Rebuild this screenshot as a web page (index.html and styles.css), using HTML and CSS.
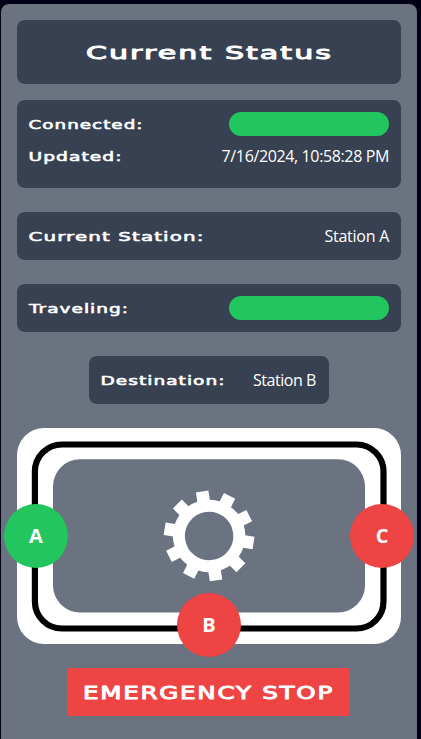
FILE: index.html
```html
<!DOCTYPE html>
<html lang="en">
<head>
<meta charset="utf-8">
<title>Current Status</title>
<link rel="stylesheet" href="styles.css">
</head>
<body>
<main class="panel">
  <h1 class="box title"><svg class="wide large" width="246" height="32"><text x="0" y="23" textLength="247" lengthAdjust="spacingAndGlyphs">Current Status</text></svg></h1>
  <section class="box status">
    <div class="row"><svg class="wide" width="114" height="24"><text x="-0.5" y="17" textLength="115" lengthAdjust="spacingAndGlyphs">Connected:</text></svg><span class="pill"></span></div>
    <div class="row"><svg class="wide" width="93" height="24"><text x="-0.5" y="17" textLength="94" lengthAdjust="spacingAndGlyphs">Updated:</text></svg><span class="value date">7/16/2024, 10:58:28 PM</span></div>
  </section>
  <section class="box row"><svg class="wide" width="175" height="24"><text x="-0.5" y="17" textLength="176" lengthAdjust="spacingAndGlyphs">Current Station:</text></svg><span class="value">Station A</span></section>
  <section class="box row"><svg class="wide" width="99" height="24"><text x="0" y="17" textLength="100" lengthAdjust="spacingAndGlyphs">Traveling:</text></svg><span class="pill"></span></section>
  <section class="box row destination"><svg class="wide" width="124" height="24"><text x="-0.5" y="17" textLength="125" lengthAdjust="spacingAndGlyphs">Destination:</text></svg><span class="value short">Station B</span></section>
  <section class="track">
    <svg class="map" width="384" height="216" viewBox="0 0 384 216">
      <rect width="384" height="216" rx="27" fill="#fff"/>
      <rect x="36" y="31.3" width="312" height="153.2" rx="27" fill="#6b7280"/>
      <rect x="17.9" y="16.5" width="348.6" height="184" rx="27" fill="none" stroke="#000" stroke-width="6.2"/>
      <g transform="translate(192.1 107.9) rotate(-8.9)">
        <circle r="30.2" fill="none" stroke="#fff" stroke-width="12"/>
        <g fill="#fff">
          <rect x="-6.3" y="-45" width="12.6" height="13"/>
          <rect x="-6.3" y="-45" width="12.6" height="13" transform="rotate(36)"/>
          <rect x="-6.3" y="-45" width="12.6" height="13" transform="rotate(72)"/>
          <rect x="-6.3" y="-45" width="12.6" height="13" transform="rotate(108)"/>
          <rect x="-6.3" y="-45" width="12.6" height="13" transform="rotate(144)"/>
          <rect x="-6.3" y="-45" width="12.6" height="13" transform="rotate(180)"/>
          <rect x="-6.3" y="-45" width="12.6" height="13" transform="rotate(216)"/>
          <rect x="-6.3" y="-45" width="12.6" height="13" transform="rotate(252)"/>
          <rect x="-6.3" y="-45" width="12.6" height="13" transform="rotate(288)"/>
          <rect x="-6.3" y="-45" width="12.6" height="13" transform="rotate(324)"/>
        </g>
      </g>
    </svg>
    <span class="stop stop-a">A</span>
    <span class="stop stop-b">B</span>
    <span class="stop stop-c">C</span>
  </section>
  <button class="emergency"><svg class="wide large" width="250" height="32"><text x="0" y="23" textLength="251" lengthAdjust="spacingAndGlyphs">EMERGENCY STOP</text></svg></button>
</main>
</body>
</html>
```
FILE: styles.css
```css
* { box-sizing: border-box; }
html { background: #020017; overflow: hidden; }
body { margin: 0; padding: 4px 4px 0 1px; font-family: "Open Sans", "Noto Sans", sans-serif; color: #fff; }
.panel {
  display: flex; flex-direction: column; align-items: center; gap: 24px;
  height: 760px; padding: 16px; border-radius: 8px; background: #6b7280;
}
.box { width: 384px; flex: none; margin: 0; padding: 12px; border-radius: 8px; background: #374151; }
.title { display: flex; justify-content: center; padding: 16px; margin-bottom: -8px; }
.status { display: flex; flex-direction: column; gap: 8px; height: 88px; }
.row { display: flex; justify-content: space-between; align-items: center; }
.destination { width: 240px; }
.wide {
  display: block; flex: none; overflow: visible;
  fill: #fff; stroke: #fff; stroke-width: 0.6px; stroke-linejoin: round;
  font: 400 12.5px "DejaVu Sans", sans-serif; letter-spacing: 0.7px;
}
.large { font-size: 18.5px; stroke-width: 1px; letter-spacing: 1.3px; }
.pill { width: 160px; height: 24px; border-radius: 12px; background: #22c55e; }
.value { font-size: 16px; line-height: 24px; letter-spacing: -0.25px; white-space: nowrap; }
.date { letter-spacing: -0.37px; }
.short { letter-spacing: -0.45px; padding-right: 1px; }
.track { position: relative; width: 384px; height: 216px; flex: none; }
.map { display: block; }
.stop {
  position: absolute; display: flex; align-items: center; justify-content: center;
  width: 64px; height: 64px; border-radius: 50%; background: #ef4444;
  font-size: 20px; font-weight: 700; line-height: 28px;
}
.stop-a { left: -13px; top: 76px; background: #22c55e; }
.stop-b { left: 160px; top: 165px; }
.stop-c { right: -13px; top: 76px; }
.emergency {
  flex: none; width: 283px; height: 48px; padding: 8px 16px; margin-right: 1px;
  border: 0; border-radius: 3px; background: #ef4444;
}
```
